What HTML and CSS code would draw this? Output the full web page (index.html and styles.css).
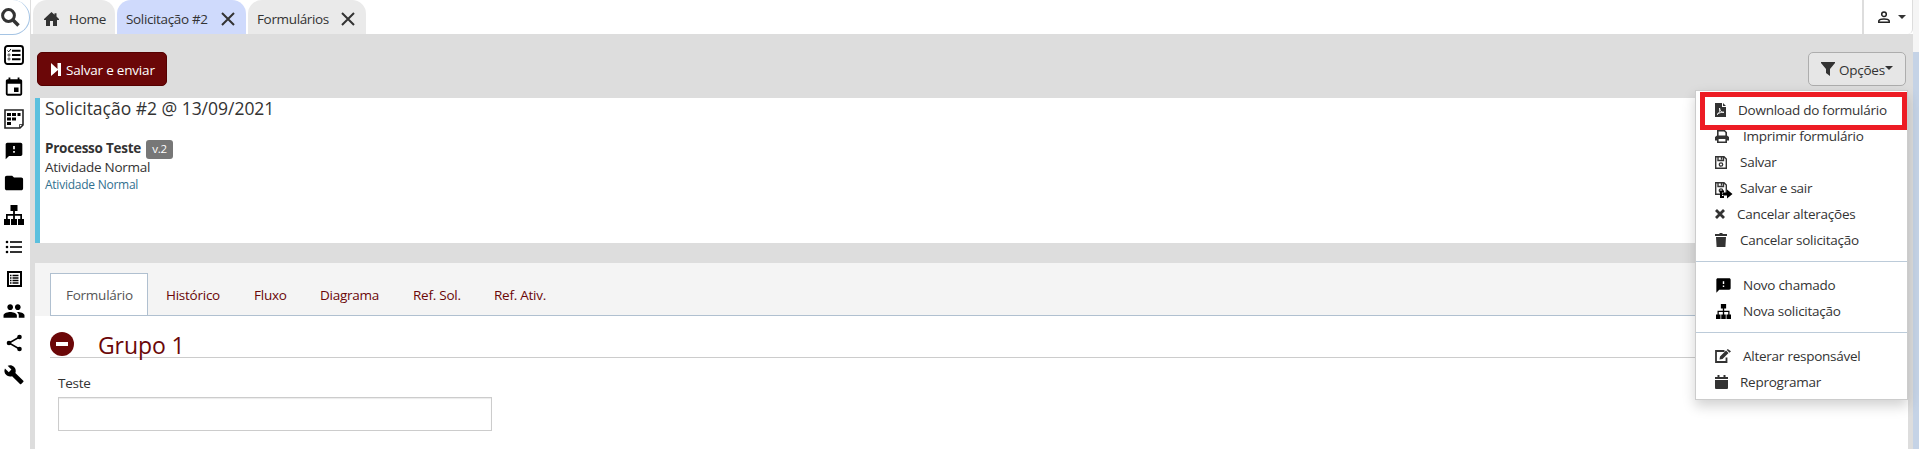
FILE: index.html
```html
<!DOCTYPE html>
<html lang="pt-BR">
<head>
<meta charset="utf-8">
<title>Solicitação #2</title>
<link rel="stylesheet" href="styles.css">
</head>
<body>
<svg class="defs" aria-hidden="true">
  <symbol id="feedback" viewBox="0 0 24 24"><path d="M20 2H4c-1.100 0-2 .9-2 2v18l4-4h14c1.100 0 2-.9 2-2V4c0-1.100-.9-2-2-2zm-7 12h-2v-2h2v2zm0-4h-2V6h2v4z"/></symbol>
  <symbol id="sitemap" viewBox="0 0 20 20"><path d="M6.500 0h7v6h-2.600v3H18v5h2v6h-6v-6h2.300v-3.300h-5.400V14H13v6H7v-6h2.100v-3.300H3.700V14H6v6H0v-6h2V9h7.100V6H6.500z"/></symbol>
  <symbol id="close" viewBox="0 0 14 14"><path d="M1 1l12 12M13 1L1 13" fill="none" stroke="currentColor" stroke-width="2"/></symbol>
  <symbol id="save" viewBox="0 0 12 13"><path d="M.7.700h8.300l2.300 2.300v9.300H.7zM3 1v3.500h5.500V1M6.500 1v2.500" fill="none" stroke="currentColor" stroke-width="1.400"/><circle cx="6" cy="8.500" r="1.700" fill="none" stroke="currentColor" stroke-width="1.300"/></symbol>
</svg>
<div class="app">
  <aside class="sidebar">
    <div class="search"><svg width="19" height="19" viewBox="0 0 19 19"><circle cx="7.500" cy="7.500" r="5.900" fill="none" stroke="#333" stroke-width="3"/><path d="M11.500 11.500l6 6" stroke="#333" stroke-width="3.600"/></svg></div>
    <nav class="nav">
      <svg width="20" height="20" viewBox="0 0 20 20"><rect x="1" y="1" width="18" height="18" rx="2.500" fill="none" stroke="#000" stroke-width="1.900"/><path d="M8 5.700h8.500M8 10h8.500M8 14.300h8.500" stroke="#000" stroke-width="1.900"/><path d="M3.500 5.500l1.200 1.300L7 4" fill="none" stroke="#000"/><circle cx="5" cy="10" r="1.100" fill="none" stroke="#000" stroke-width=".7"/><circle cx="5" cy="14" r="1.100" fill="none" stroke="#000" stroke-width=".7"/></svg>
      <svg width="20" height="20" viewBox="2 0.500 20 22"><path d="M17 12h-5v5h5v-5zM16 1v2H8V1H6v2H5c-1.110 0-1.990.9-1.990 2L3 19c0 1.100.890 2 2 2h14c1.100 0 2-.9 2-2V5c0-1.100-.9-2-2-2h-1V1h-2zm3 18H5V8h14v11z"/></svg>
      <svg width="20" height="20" viewBox="0 0 20 20"><path d="M1 1h18v15l-3 3H1z" fill="#fff" stroke="#222" stroke-width="1.600"/><path d="M15.500 19v-3.500H19" fill="none" stroke="#222" stroke-width=".8"/><path d="M3 4h4v3H3zM8 4h4v3H8zM13.500 4h3v3h-3zM3 8.500h4v3H3zM8 8.500h4v3H8zM3 13h4v3H3z"/></svg>
      <svg width="20" height="20"><use href="#feedback"/></svg>
      <svg width="20" height="20" viewBox="1 2 22 20"><path d="M10 4H4c-1.100 0-2 .9-2 2v12c0 1.100.9 2 2 2h16c1.100 0 2-.9 2-2V8c0-1.100-.9-2-2-2h-8l-2-2z"/></svg>
      <svg width="20" height="20"><use href="#sitemap"/></svg>
      <svg width="20" height="20" viewBox="0 0 20 20"><path d="M6 5h12M6 10h12M6 15h12" stroke="#333" stroke-width="1.900"/><circle cx="3" cy="5" r="1.300"/><circle cx="3" cy="10" r="1.300"/><circle cx="3" cy="15" r="1.300"/></svg>
      <svg width="20" height="20" viewBox="0 0 20 20"><rect x="4" y="3" width="13" height="14" fill="none" stroke="#000" stroke-width="2"/><path d="M8.500 6.500h6M8.500 9h6M8.500 11.500h6M8.500 14h6M6 6.500h1.500M6 9h1.500M6 11.500h1.500M6 14h1.500" stroke="#000" stroke-width="1.300"/></svg>
      <svg width="20" height="20" viewBox="1.500 2 21 20"><path d="M16 11c1.660 0 2.990-1.340 2.990-3S17.660 5 16 5c-1.660 0-3 1.340-3 3s1.340 3 3 3zm-8 0c1.660 0 2.990-1.340 2.990-3S9.660 5 8 5C6.340 5 5 6.340 5 8s1.340 3 3 3zm0 2c-2.330 0-7 1.170-7 3.500V19h14v-2.500c0-2.330-4.670-3.500-7-3.500zm8 0c-.290 0-.620.020-.970.050 1.160.840 1.970 1.970 1.970 3.450V19h6v-2.500c0-2.330-4.670-3.500-7-3.500z"/></svg>
      <svg width="20" height="20" viewBox="0 0 20 20"><path d="M15.500 4L5 10l10.500 6" fill="none" stroke="#000" stroke-width="1.500"/><circle cx="15.500" cy="4" r="2.300"/><circle cx="5" cy="10" r="2.300"/><circle cx="15.500" cy="16" r="2.300"/></svg>
      <svg width="20" height="20" viewBox="0.500 0.800 23 23"><path d="M22.700 19l-9.100-9.100c.9-2.300.4-5-1.500-6.900-2-2-5-2.400-7.400-1.300L9 6 6 9 1.600 4.700C.4 7.100.9 10.100 2.900 12.100c1.900 1.900 4.600 2.400 6.900 1.500l9.100 9.100c.4.400 1 .4 1.400 0l2.300-2.300c.5-.4.5-1.100.1-1.400z"/></svg>
    </nav>
  </aside>
  <div class="page">
    <header class="topbar">
      <div class="tab tab-home"><svg width="15" height="14" viewBox="0 0 15 14"><path d="M7.500 0l3 2.800V1.200h2v3.400L15 7v1h-2v6H9V9H6v5H2V8H0V7z" fill="#333"/></svg><span>Home</span></div>
      <div class="tab tab-active"><span>Solicitação #2</span><svg width="14" height="14"><use href="#close"/></svg></div>
      <div class="tab tab-forms"><span>Formulários</span><svg width="14" height="14"><use href="#close"/></svg></div>
      <div class="user"><svg width="12" height="12" viewBox="0 0 12 12" fill="none" stroke="#222" stroke-width="1.500"><circle cx="6" cy="3.200" r="2.300"/><path d="M.8 11.200V9.800C2 7.300 10 7.300 11.200 9.800v1.400z"/></svg><i class="caret"></i></div>
    </header>
    <main class="main">
      <div class="toolbar">
        <button class="btn btn-primary"><svg width="10" height="13" viewBox="0 0 10 13"><path d="M0 0l6.500 6V0H10v13H7V7L0 13z" fill="#fff"/></svg><span>Salvar e enviar</span></button>
        <div class="options">
          <button class="btn btn-default"><svg width="14" height="14" viewBox="0 0 14 14"><path d="M0 0h14v1L9 7v7l-4-3V7L0 1z" fill="#333"/></svg><span>Opções</span><i class="caret"></i></button>
          <div class="menu">
            <div class="item item-marked"><svg width="11" height="14" viewBox="0 0 11 14"><path d="M0 0h7v4h4v10H0zM8 0l3 3H8z" fill="#333"/><path d="M2 11.500c2.500-1.500 3.500-4 2.500-6.500 0 3 2 4.500 4.500 4.300C6 9 4 10 2 11.500z" fill="none" stroke="#fff" stroke-width=".9"/></svg><span>Download do formulário</span></div>
            <div class="item"><svg width="14" height="13" viewBox="0 0 14 13"><path d="M2.800 6V.8h6.700l1.700 1.700V6" fill="none" stroke="#333" stroke-width="1.600"/><path d="M2 5.500h10l2 1.500v3.500h-2V9H2v1.500H0V7z" fill="#333"/><path d="M2.800 9v3.200h8.400V9" fill="none" stroke="#333" stroke-width="1.600"/></svg><span class="gap-print">Imprimir formulário</span></div>
            <div class="item"><svg width="12" height="13"><use href="#save"/></svg><span class="gap-wide">Salvar</span></div>
            <div class="item"><svg class="save-exit" width="18" height="19" viewBox="0 0 18 19"><use href="#save" y="3" width="12" height="13"/><path d="M9 12.500H6v5.500h3" fill="none" stroke="#000" stroke-width="2"/><path d="M8 13.500h4v-3l5.500 4.500-5.500 4.500v-3H8z" fill="#000"/></svg><span class="gap-wide">Salvar e sair</span></div>
            <div class="item"><svg width="10" height="10" viewBox="0 0 10 10"><path d="M1 1l8 8M9 1L1 9" stroke="#333" stroke-width="2.800"/></svg><span>Cancelar alterações</span></div>
            <div class="item"><svg width="12" height="14" viewBox="0 0 12 14"><path d="M0 1h4l1-1h2l1 1h4v2H0zM1 4h10l-.6 10H1.600z" fill="#333"/></svg><span class="gap-wide">Cancelar solicitação</span></div>
            <hr>
            <div class="item"><svg class="inset" width="15" height="15" viewBox="1.500 1.500 21 21"><use href="#feedback" width="24" height="24"/></svg><span>Novo chamado</span></div>
            <div class="item"><svg class="inset" width="15" height="15"><use href="#sitemap"/></svg><span>Nova solicitação</span></div>
            <hr>
            <div class="item"><svg width="16" height="14" viewBox="0 0 16 14"><path d="M9.500 2H1v11h10.500V8.500" fill="none" stroke="#333" stroke-width="1.800"/><path d="M4.500 10.500l.5-3L11 1.500l2.500 2.500-6 6zM11.800.9l.9-.9L16 2.200l-1.500 1.500z" fill="#333"/></svg><span>Alterar responsável</span></div>
            <div class="item"><svg width="13" height="14" viewBox="0 0 13 14"><path d="M0 5h13v8q0 1-1 1H1q-1 0-1-1zM0 4V2h2.500V0h2v2h4V0h2v2H13v2z" fill="#333"/></svg><span>Reprogramar</span></div>
          </div>
        </div>
      </div>
      <section class="summary">
        <h1>Solicitação #2 @ 13/09/2021</h1>
        <div class="process"><b>Processo Teste</b><span class="badge">v.2</span></div>
        <div class="activity">Atividade Normal</div>
        <a class="activity-link">Atividade Normal</a>
      </section>
      <section class="form">
        <nav class="form-tabs">
          <a class="current"><span>Formulário</span></a>
          <a class="f1"><span>Histórico</span></a>
          <a class="f2"><span>Fluxo</span></a>
          <a class="f3"><span>Diagrama</span></a>
          <a class="f4"><span>Ref. Sol.</span></a>
          <a class="f5"><span>Ref. Ativ.</span></a>
        </nav>
        <div class="group">
          <div class="group-head"><i class="minus"></i><h2>Grupo 1</h2></div>
          <label>Teste</label>
          <input class="field" type="text">
        </div>
      </section>
    </main>
  </div>
  <div class="scroll"></div>
</div>
</body>
</html>
```
FILE: styles.css
```css
* { box-sizing: border-box; }
body { margin: 0; background: #fff; color: #333; font: 13.5px/20px "Open Sans", "Noto Sans", sans-serif; letter-spacing: -.25px; }
svg { display: block; flex: none; overflow: visible; }
.defs { position: absolute; width: 0; height: 0; }
.app { display: flex; height: 449px; overflow: hidden; }
.sidebar { width: 30px; flex: none; }
.search { width: 30px; height: 35px; border: 1px solid #a5c4e4; border-left: 0; border-top: 0; border-radius: 0 18px 18px 0; padding: 8px 0 0 1px; }
.nav { display: flex; flex-direction: column; gap: 12px; padding: 10px 0 0 4px; }
.page { flex: 1; min-width: 0; display: flex; flex-direction: column; border-left: 1px solid #ddd; }
.topbar { display: flex; height: 34px; flex: none; padding-left: 2px; gap: 2px; }
.tab { display: flex; align-items: center; background: #eaeaea; border-radius: 14px 14px 0 0; padding-top: 4px; white-space: nowrap; }
.tab-home { width: 82px; padding-left: 11px; gap: 10px; }
.tab-active { width: 129px; background: #cfdafc; padding-left: 9px; justify-content: space-between; padding-right: 11px; letter-spacing: -.35px; }
.tab-forms { width: 118px; padding-left: 9px; justify-content: space-between; padding-right: 11px; letter-spacing: -.35px; }
.user { width: 51px; margin-left: auto; border: 1px solid #ddd; border-top: 0; border-bottom: 0; border-left-width: 2px; border-radius: 0 0 5px 0; display: flex; align-items: center; gap: 8px; padding-left: 14px; }
.caret { border: 4px solid transparent; border-top-color: #333; border-bottom: 0; }
.main { flex: 1; background: #ddd; padding: 18px 5px 0 4px; }
.toolbar { display: flex; justify-content: space-between; height: 46px; padding: 0 2px; }
.btn { height: 34px; border-radius: 5px; font: inherit; letter-spacing: inherit; display: flex; align-items: center; border: 1px solid #500; white-space: nowrap; }
.btn span { padding-top: 2px; }
.btn-primary { width: 130px; background: #6b0708; color: #fff; padding: 0 0 0 13px; gap: 5px; letter-spacing: -.2px; }
.btn-default { width: 98px; background: #e6e6e6; border-color: #adadad; color: #333; padding: 0 0 0 12px; gap: 4px; }
.btn-default .caret { margin: -2px 0 0 -4px; }
.options { position: relative; }
.menu { position: absolute; z-index: 2; top: 38px; right: -2px; width: 213px; height: 310px; background: #fff; border: 1px solid #ccc; box-shadow: 0 6px 12px rgba(0,0,0,.18); padding: 6px 0 0; }
.item { display: flex; align-items: center; height: 26px; padding-left: 19px; white-space: nowrap; }
.item span { margin-left: 12px; }
.item-marked { height: 38px; margin: -5px 0 -7px 4px; width: 207px; border: 5px solid #ed1c24; padding: 0 0 2px 10px; position: relative; background: #fff; }
.item .gap-print { margin-left: 14px; }
.item .gap-wide { margin-left: 13px; }
.save-exit { margin-right: -6px; }
.item .inset { margin-left: 1px; }
.menu hr { border: 0; border-top: 1px solid #bccbd9; margin: 8px 0 10px; }
.summary { background: #fff; height: 145px; border-left: 5px solid #5bc0de; padding-left: 5px; }
h1 { font-size: 17.5px; font-weight: 400; line-height: 20px; margin: 0 0 20px; letter-spacing: -.02px; }
.process { display: flex; height: 20px; align-items: center; gap: 5px; white-space: nowrap; }
.badge { background: #777; color: #fff; border-radius: 3px; font-size: 11.5px; width: 27px; height: 19px; text-align: center; line-height: 18px; margin-top: 2px; }
.activity { line-height: 18px; }
.activity-link { display: block; color: #31708f; font-size: 12px; line-height: 17px; }
.form { margin-top: 20px; background: #fff; height: 186px; }
.form-tabs { background: linear-gradient(#b0c0d0, #b0c0d0) 15px 52px / 100% 1px no-repeat #f4f4f4; height: 53px; padding: 10px 0 0 15px; display: flex; }
.form-tabs a { color: #6b0708; height: 43px; line-height: 44px; padding-left: 18px; white-space: nowrap; }
.form-tabs .current { width: 98px; padding-left: 15px; background: #fff; color: #555; border: 1px solid #b0c0d0; line-height: 42px; }
.f1 { width: 88px; } .f2 { width: 66px; } .f3 { width: 93px; } .f4 { width: 81px; }
.group { padding-left: 15px; }
.group-head { height: 42px; border-bottom: 1px solid #ccc; display: flex; align-items: center; }
.minus { width: 24px; height: 24px; border-radius: 50%; background: linear-gradient(#fff, #fff) center / 12px 4px no-repeat #6b0708; margin-top: 14px; }
h2 { margin: 17px 0 0 24px; font-size: 23px; font-weight: 400; color: #6b0708; line-height: 28px; letter-spacing: -.1px; }
label { display: block; margin: 15px 0 4px 8px; }
.field { display: block; margin-left: 8px; width: 434px; height: 34px; border: 1px solid #ccc; box-shadow: inset 0 1px 1px rgba(0,0,0,.08); }
.scroll { width: 6px; flex: none; background: linear-gradient(#f5f5f5 52px, #c5d3e6 52px); }
```
